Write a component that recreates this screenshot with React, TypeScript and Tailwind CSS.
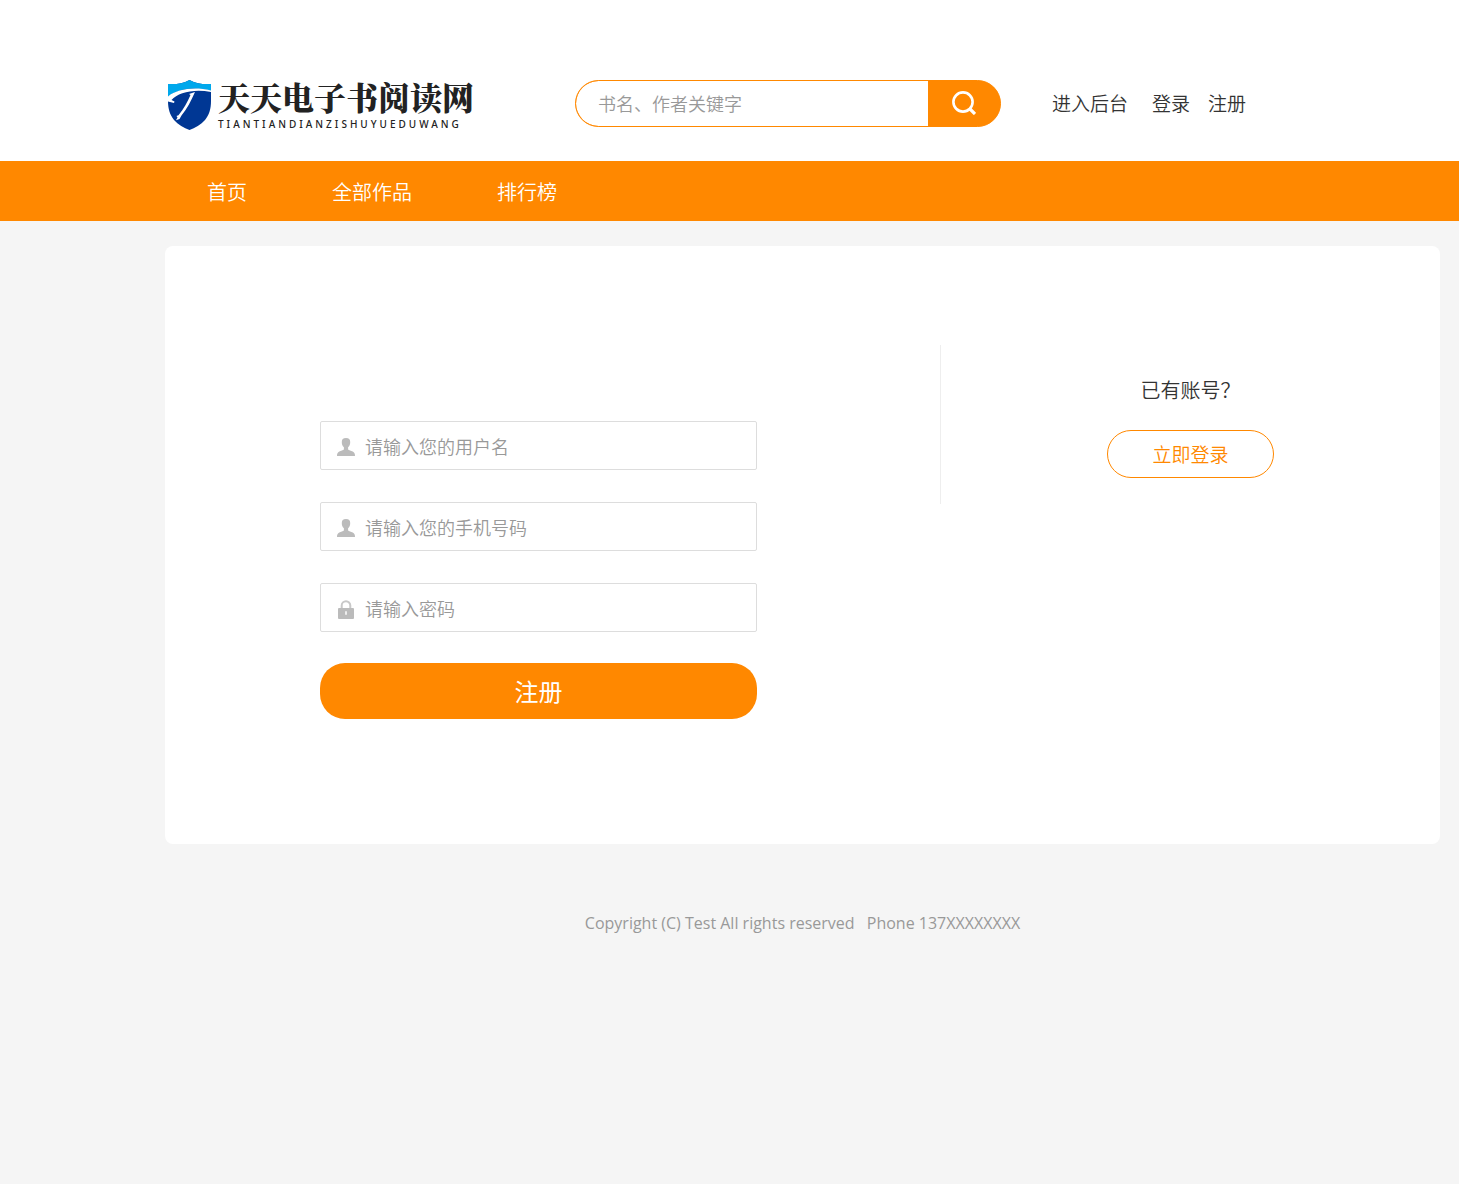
import type { ReactNode } from "react";

function Logo() {
  return (
    <a href="#" className="flex w-[307px] shrink-0 items-center gap-[6px]" aria-label="天天电子书阅读网">
      <svg width="44" height="52" viewBox="0 0 44 52" className="shrink-0" aria-hidden="true">
        <path d="M21.500 1C15 4.500 8 5.500 0 5V22c0 8 2 14 6 19 4 4.500 10 8 15.500 10C27 49 33 45.500 37 41c4-5 6-11 6-19V5C35 5.500 28 4.500 21.500 1Z" fill="#003794" />
        <path d="M21.500 1C15 4.500 8 5.500 0 5V18C9 10 26 7 43 12V5C35 5.500 28 4.500 21.500 1Z" fill="#00a8ec" />
        <path d="M0 17.500C9 10 26 7.500 43 11.500v1.500C26 9.500 10 13.500 3.500 21l3 1.500-.5 1.500-6-1.500Z" fill="#fff" />
        <path d="M21 15 27 13C23 22 19 30 13.500 36.500L11.500 40l-3.500 1.200 1.500-2.700-1-1.500 2-.8C15.500 30 19.500 23 22.500 16Z" fill="#fff" />
      </svg>
      <span className="flex flex-col text-[#222]">
        <span className="font-['Noto_Serif_CJK_SC','Noto_Sans_CJK_SC',serif] text-[32px] leading-[34px] font-black whitespace-nowrap">
          天天电子书阅读网
        </span>
        <span className="pt-1 font-['Noto_Sans',sans-serif] text-[10px] leading-[14px] font-medium tracking-[3px] whitespace-nowrap">
          TIANTIANDIANZISHUYUEDUWANG
        </span>
      </span>
    </a>
  );
}

function UserIcon() {
  return (
    <svg width="18" height="19" viewBox="0 0 18 19" fill="#bbb" aria-hidden="true">
      <path d="M9 0C6 0 4.800 1.500 4.800 4c0 2.300.6 4.200 2.100 5.300v2.200c-.8.9-2.900 1.300-4.600 2.100C.6 14.500 0 15.600 0 18h18c0-2.400-.6-3.500-2.300-4.400-1.700-.8-3.800-1.200-4.600-2.100V9.300c1.500-1.100 2.100-3 2.100-5.300 0-2.500-1.200-4-4.200-4Z" />
    </svg>
  );
}

function LockIcon() {
  return (
    <svg width="18" height="19" viewBox="0 0 18 19" aria-hidden="true">
      <path d="M4.700 9V5.500a4.300 4.300 0 0 1 8.600 0V9" fill="none" stroke="#c8c8c8" strokeWidth="2" />
      <rect x="1" y="8" width="16" height="11" rx="1" fill="#bbb" />
      <rect x="8" y="11" width="2" height="4" rx="1" fill="#eee" />
    </svg>
  );
}

function Field({ icon, label, type }: { icon: ReactNode; label: string; type: string }) {
  return (
    <label className="flex h-[49px] items-center gap-[10px] rounded-[2px] border border-[#ddd] bg-white px-4">
      <span className="shrink-0 pt-1">{icon}</span>
      <input
        type={type}
        aria-label={label}
        placeholder={label}
        className="h-full min-w-0 flex-1 bg-transparent text-[18px] font-[350] outline-none placeholder:text-[#999]"
      />
    </label>
  );
}

export default function App() {
  return (
    <div className="min-h-screen bg-[#f5f5f5] font-['Noto_Sans_CJK_SC',sans-serif] text-[#333]">
      <header className="bg-white pt-[79px] pb-[30px]">
        <div className="mr-[19px] ml-[165px] flex h-[52px] max-w-[1275px] items-start pl-[3px]">
          <Logo />
          <form
            className="mt-px ml-[100px] flex h-[47px] w-[426px] overflow-hidden rounded-full border border-[#ff8800] bg-[#ff8800]"
            onSubmit={(e) => e.preventDefault()}
          >
            <input
              type="text"
              aria-label="书名、作者关键字"
              placeholder="书名、作者关键字"
              className="min-w-0 flex-1 rounded-l-full bg-white pl-[22px] text-[18px] font-[350] outline-none placeholder:text-[#999]"
            />
            <button type="submit" aria-label="搜索" className="flex w-[72px] items-center justify-center bg-[#ff8800] pb-[2px]">
              <svg width="24" height="24" viewBox="0 0 24 24" fill="none" stroke="#fff" aria-hidden="true">
                <circle cx="11" cy="11" r="9.600" strokeWidth="2.600" />
                <path d="m17.500 17.500 5.500 5.500" strokeWidth="3.200" />
              </svg>
            </button>
          </form>
          <div className="mt-px ml-[51px] flex h-[47px] items-center text-[19px] font-[350] whitespace-nowrap">
            <a href="#">进入后台</a>
            <a href="#" className="ml-6">登录</a>
            <a href="#" className="ml-[18px]">注册</a>
          </div>
        </div>
      </header>

      <nav className="bg-[#ff8800]">
        <div className="mr-[19px] ml-[165px] flex h-[60px] max-w-[1275px] items-center gap-[85px] pt-px pl-[42px] text-[20px] font-[350] text-white">
          <a href="#">首页</a>
          <a href="#">全部作品</a>
          <a href="#">排行榜</a>
        </div>
      </nav>

      <main className="mt-[25px] mr-[19px] ml-[165px] flex max-w-[1275px] items-start rounded-lg bg-white pt-[99px] pb-[125px]">
        <form className="mt-[76px] ml-[155px] w-[437px]" onSubmit={(e) => e.preventDefault()}>
          <div className="flex flex-col gap-8">
            <Field icon={<UserIcon />} label="请输入您的用户名" type="text" />
            <Field icon={<UserIcon />} label="请输入您的手机号码" type="tel" />
            <Field icon={<LockIcon />} label="请输入密码" type="password" />
          </div>
          <button type="submit" className="mt-[31px] h-14 w-full rounded-[25px] bg-[#ff8800] text-[24px] text-white">
            注册
          </button>
        </form>
        <section className="ml-auto flex h-[159px] w-[500px] flex-col items-center border-l border-[#eee] pt-[30px]">
          <h2 className="text-[20px] leading-[30px] font-[350] whitespace-nowrap">已有账号？</h2>
          <a
            href="#"
            className="mt-[25px] flex h-12 w-[167px] items-center justify-center rounded-full border border-[#ff8800] text-[19px] font-[350] text-[#ff8800]"
          >
            立即登录
          </a>
        </section>
      </main>

      <footer className="mr-[19px] ml-[165px] max-w-[1275px] pt-[67px] pb-10 text-center font-['Open_Sans','Noto_Sans',sans-serif] text-[16px] leading-6 text-[#999]">
        Copyright (C) Test All rights reserved <span className="ml-2">Phone 137XXXXXXXX</span>
      </footer>
    </div>
  );
}
